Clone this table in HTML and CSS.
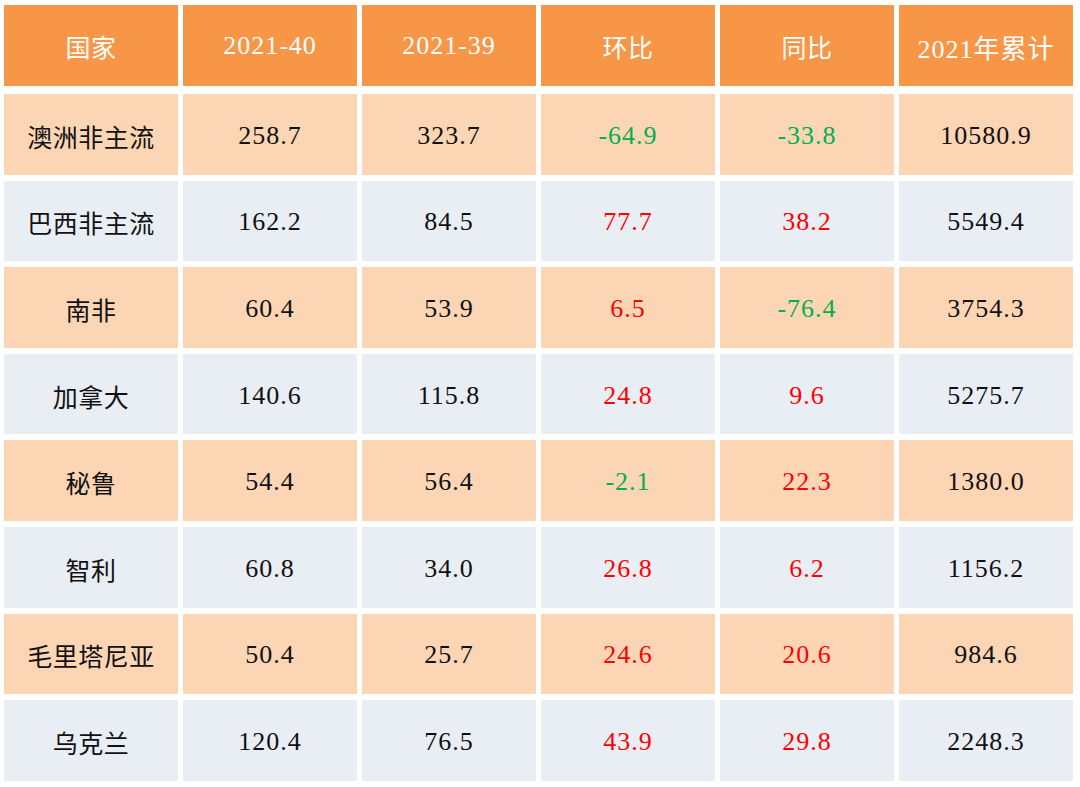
FILE: index.html
```html
<!DOCTYPE html>
<html lang="zh-CN">
<head>
<meta charset="utf-8">
<link rel="stylesheet" href="styles.css">
</head>
<body>
<div class="table">
  <div class="cell head name">国家</div>
  <div class="cell head">2021-40</div>
  <div class="cell head">2021-39</div>
  <div class="cell head name">环比</div>
  <div class="cell head name">同比</div>
  <div class="cell head">2021年累计</div>

  <div class="cell peach name">澳洲非主流</div>
  <div class="cell peach">258.7</div>
  <div class="cell peach">323.7</div>
  <div class="cell peach down">-64.9</div>
  <div class="cell peach down">-33.8</div>
  <div class="cell peach">10580.9</div>

  <div class="cell blue name">巴西非主流</div>
  <div class="cell blue">162.2</div>
  <div class="cell blue">84.5</div>
  <div class="cell blue up">77.7</div>
  <div class="cell blue up">38.2</div>
  <div class="cell blue">5549.4</div>

  <div class="cell peach name">南非</div>
  <div class="cell peach">60.4</div>
  <div class="cell peach">53.9</div>
  <div class="cell peach up">6.5</div>
  <div class="cell peach down">-76.4</div>
  <div class="cell peach">3754.3</div>

  <div class="cell blue name">加拿大</div>
  <div class="cell blue">140.6</div>
  <div class="cell blue">115.8</div>
  <div class="cell blue up">24.8</div>
  <div class="cell blue up">9.6</div>
  <div class="cell blue">5275.7</div>

  <div class="cell peach name">秘鲁</div>
  <div class="cell peach">54.4</div>
  <div class="cell peach">56.4</div>
  <div class="cell peach down">-2.1</div>
  <div class="cell peach up">22.3</div>
  <div class="cell peach">1380.0</div>

  <div class="cell blue name">智利</div>
  <div class="cell blue">60.8</div>
  <div class="cell blue">34.0</div>
  <div class="cell blue up">26.8</div>
  <div class="cell blue up">6.2</div>
  <div class="cell blue">1156.2</div>

  <div class="cell peach name">毛里塔尼亚</div>
  <div class="cell peach">50.4</div>
  <div class="cell peach">25.7</div>
  <div class="cell peach up">24.6</div>
  <div class="cell peach up">20.6</div>
  <div class="cell peach">984.6</div>

  <div class="cell blue name">乌克兰</div>
  <div class="cell blue">120.4</div>
  <div class="cell blue">76.5</div>
  <div class="cell blue up">43.9</div>
  <div class="cell blue up">29.8</div>
  <div class="cell blue">2248.3</div>
</div>
</body>
</html>
```
FILE: styles.css
```css
html, body {
  margin: 0;
  padding: 0;
  background: #ffffff;
}

.table {
  display: grid;
  grid-template-columns: repeat(6, 174px);
  grid-template-rows: 83px repeat(8, 80.6px);
  column-gap: 5px;
  row-gap: 6px;
  padding: 5px 0 0 4px;
  font-family: "Liberation Serif", "Noto Sans CJK SC", serif;
  font-size: 26px;
  letter-spacing: 1px;
  color: #111111;
}

.cell {
  display: flex;
  align-items: center;
  justify-content: center;
  white-space: nowrap;
  padding-top: 3px;
  box-sizing: border-box;
}

.name {
  font-size: 25px;
  letter-spacing: 0.5px;
}

.head {
  background: #f79646;
  color: #ffffff;
  margin-bottom: 2px;
  padding-top: 1px;
}

.peach {
  background: #fcd5b4;
}

.blue {
  background: #e9edf4;
}

.up {
  color: #ff0000;
}

.down {
  color: #00b050;
}
```
